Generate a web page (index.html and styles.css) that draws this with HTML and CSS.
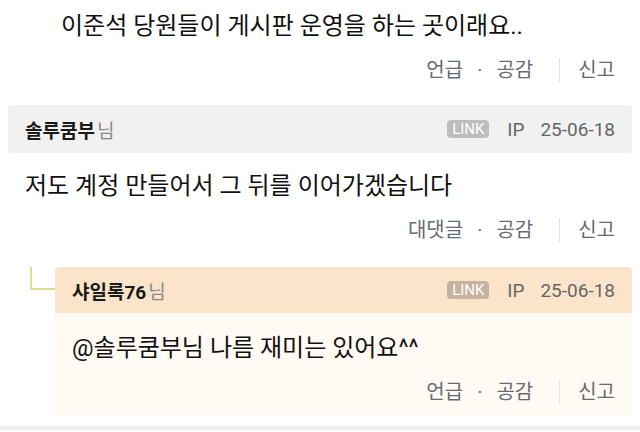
FILE: index.html
```html
<!DOCTYPE html>
<html lang="ko">
<head>
    <meta charset="UTF-8">
    <meta name="viewport" content="width=device-width, initial-scale=1.0">
    <title>댓글</title>
    <link rel="stylesheet" href="styles.css">
</head>
<body>

<div class="prev-reply">
    <p class="text">이준석 당원들이 게시판 운영을 하는 곳이래요..</p>
    <div class="actions">
        <span>언급</span><span class="dot">·</span><span>공감</span><span class="sep"></span><span>신고</span>
    </div>
</div>

<div class="comment">
    <div class="head">
        <div class="author"><b>솔루쿰부</b><span class="nim">님</span></div>
        <div class="meta"><span class="badge">LINK</span><span class="ip">IP</span><span>25-06-18</span></div>
    </div>
    <p class="text">저도 계정 만들어서 그 뒤를 이어가겠습니다</p>
    <div class="actions">
        <span>대댓글</span><span class="dot">·</span><span>공감</span><span class="sep"></span><span>신고</span>
    </div>
</div>

<div class="reply">
    <div class="connector"></div>
    <div class="reply-box">
        <div class="head peach">
            <div class="author"><b>샤일록76</b><span class="nim">님</span></div>
            <div class="meta"><span class="badge">LINK</span><span class="ip">IP</span><span>25-06-18</span></div>
        </div>
        <div class="reply-body">
            <p class="text">@솔루쿰부님 나름 재미는 있어요^^</p>
            <div class="actions">
                <span>언급</span><span class="dot">·</span><span>공감</span><span class="sep"></span><span>신고</span>
            </div>
        </div>
    </div>
</div>

<div class="divider"></div>

</body>
</html>
```

FILE: styles.css
```css
/* 댓글 목록 */
body {
    margin: 0;
    font-family: Roboto, "Noto Sans CJK KR", sans-serif;
    background-color: #fff;
    color: #111;
}
p {
    margin: 0;
}
.text {
    font-size: 24px;
    line-height: 30px;
}
.actions {
    display: flex;
    justify-content: flex-end;
    align-items: center;
    margin-top: 14px;
    padding-right: 25px;
    font-size: 20px;
    line-height: 30px;
    color: #676c73;
}
.actions .dot {
    margin: 0 14px;
}
.actions .sep {
    width: 1px;
    height: 24px;
    background-color: #e4e4e4;
    margin: 0 18px 0 26px;
}

/* 이전 댓글 */
.prev-reply {
    padding: 11px 0 0 61px;
}

/* 댓글 */
.comment {
    margin-top: 20px;
}
.comment .text {
    margin-top: 18px;
    padding-left: 25px;
}
.head {
    display: flex;
    justify-content: space-between;
    align-items: center;
    height: 48px;
    margin: 0 8px;
    padding: 0 17px;
    background-color: #f1f1f1;
    border-radius: 4px;
}
.author {
    font-size: 19px;
    color: #1a1a1a;
}
.author .nim {
    margin-left: 2px;
    color: #888;
}
.meta {
    display: flex;
    align-items: center;
    font-size: 19px;
    color: #666;
}
.badge {
    display: inline-block;
    width: 42px;
    height: 18px;
    line-height: 18px;
    margin-right: 18px;
    border-radius: 4px;
    background-color: #bdbdbd;
    color: #fff;
    font-size: 15px;
    text-align: center;
}
.ip {
    margin-right: 16px;
}

/* 대댓글 */
.reply {
    display: flex;
    align-items: flex-start;
    margin: 22px 8px 0 30px;
}
.connector {
    width: 23px;
    height: 21px;
    border-left: 2px solid #dcdc92;
    border-bottom: 2px solid #dcdc92;
}
.reply-box {
    flex: 1;
    background-color: #fffaf3;
    border-radius: 4px;
}
.head.peach {
    margin: 0;
    height: 46px;
    background-color: #fbe4c9;
    border-radius: 4px 4px 0 0;
}
.head.peach .badge {
    background-color: #c5b3a0;
}
.reply-body {
    padding: 20px 0 10px 17px;
}
.reply-body .actions {
    padding-right: 17px;
}
.divider {
    height: 4px;
    margin-top: 9px;
    background-color: #eeeeee;
}
```
